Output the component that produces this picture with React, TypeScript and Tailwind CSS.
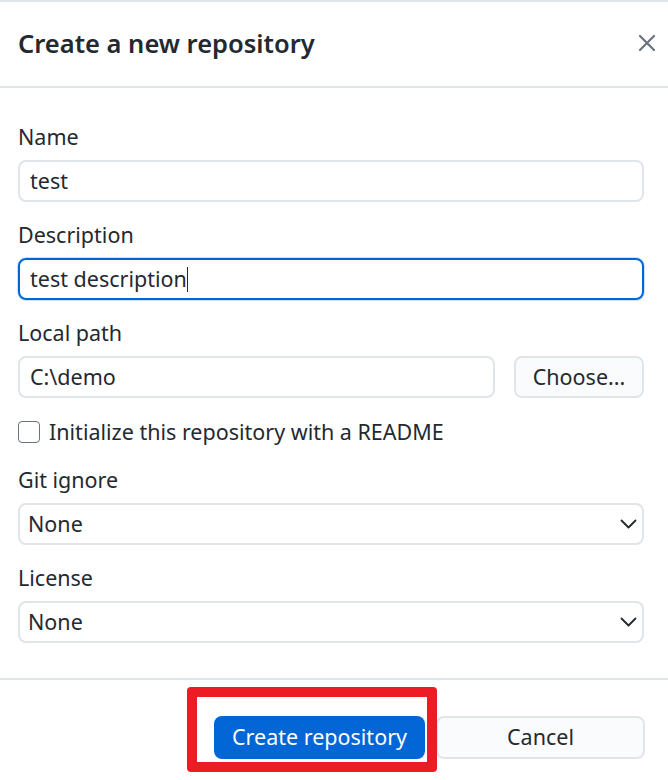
const font = { fontFamily: '"Noto Sans", "Open Sans", sans-serif' };

function Field({ label, className, children }: { label: string; className?: string; children: React.ReactNode }) {
  return (
    <div className={"flex flex-col gap-[11px] " + (className ?? "")}>
      <label className="text-[21.5px] leading-[24px] text-[#24292f]">{label}</label>
      {children}
    </div>
  );
}

function Chevron() {
  return (
    <svg width="17" height="10" viewBox="0 0 17 10" fill="none">
      <path d="M1.5 1.5 8.5 8.5 15.5 1.5" stroke="#24292f" strokeWidth="1.8" strokeLinecap="round" strokeLinejoin="round" />
    </svg>
  );
}

function Select({ value }: { value: string }) {
  return (
    <div className="h-[42px] border-2 border-[#e1e4e8] rounded-[8px] flex items-center justify-between pl-[8px] pr-[5px] text-[21.5px] text-[#24292f]">
      <span>{value}</span>
      <Chevron />
    </div>
  );
}

export default function App() {
  return (
    <div className="w-[668px] h-[780px] bg-white relative overflow-hidden" style={font}>
      <div className="border-t-2 border-[#e1e4e8]" />
      <div className="h-[86px] flex items-center justify-between pl-[18px] pr-[12px] pb-[2px] border-b-2 border-[#e1e4e8]">
        <h1 className="text-[25.5px] font-semibold text-[#24292f]">Create a new repository</h1>
        <svg width="18" height="18" viewBox="0 0 18 18" fill="none">
          <path d="M2 2 16 16 M16 2 2 16" stroke="#6a737d" strokeWidth="2.2" strokeLinecap="round" />
        </svg>
      </div>

      <div className="pl-[18px] pr-[24px] pt-[37px] flex flex-col">
        <Field label="Name">
          <div className="h-[42px] border-2 border-[#e1e4e8] rounded-[8px] flex items-center px-[10px] text-[21.5px] text-[#24292f]">
            test
          </div>
        </Field>
        <Field label="Description" className="mt-[21px]">
          <div className="h-[42px] border-2 border-[#0366d6] rounded-[8px] flex items-center px-[10px] text-[21.5px] text-[#24292f] shadow-[0_0_0_1px_#c8e1ff]">
            test description
            <span className="inline-block w-px h-[25px] bg-[#24292f]" />
          </div>
        </Field>
        <Field label="Local path" className="mt-[21px]">
          <div className="flex gap-[19px]">
            <div className="flex-1 h-[42px] border-2 border-[#e1e4e8] rounded-[8px] flex items-center px-[10px] text-[21.5px] text-[#24292f]">
              C:\demo
            </div>
            <button className="w-[130px] h-[42px] border-2 border-[#e1e4e8] bg-[#fafbfc] rounded-[8px] text-[21.5px] text-[#24292f]">
              Choose...
            </button>
          </div>
        </Field>
        <div className="flex items-center gap-[9px] mt-[23px] h-[22px]">
          <span className="w-[22px] h-[22px] border-[1.5px] border-[#6a737d] rounded-[4px] bg-white" />
          <span className="text-[21.5px] text-[#24292f]">Initialize this repository with a README</span>
        </div>
        <Field label="Git ignore" className="mt-[25px]">
          <Select value="None" />
        </Field>
        <Field label="License" className="mt-[21px]">
          <Select value="None" />
        </Field>
      </div>

      <div className="absolute left-0 right-0 top-[678px] border-t-2 border-[#e1e4e8]" />
      <div className="absolute left-0 right-0 top-[716px] flex justify-end gap-[11px] pr-[23px]">
        <button className="w-[211px] h-[43px] bg-[#0366d6] rounded-[8px] text-[21.5px] text-white">
          Create repository
        </button>
        <button className="w-[209px] h-[43px] border-2 border-[#e1e4e8] bg-[#fafbfc] rounded-[8px] text-[21.5px] text-[#24292f]">
          Cancel
        </button>
      </div>

      <div className="absolute left-[187px] top-[687px] w-[250px] h-[85px] border-[10px] border-[#ed1c24] rounded-[4px]" />
    </div>
  );
}
